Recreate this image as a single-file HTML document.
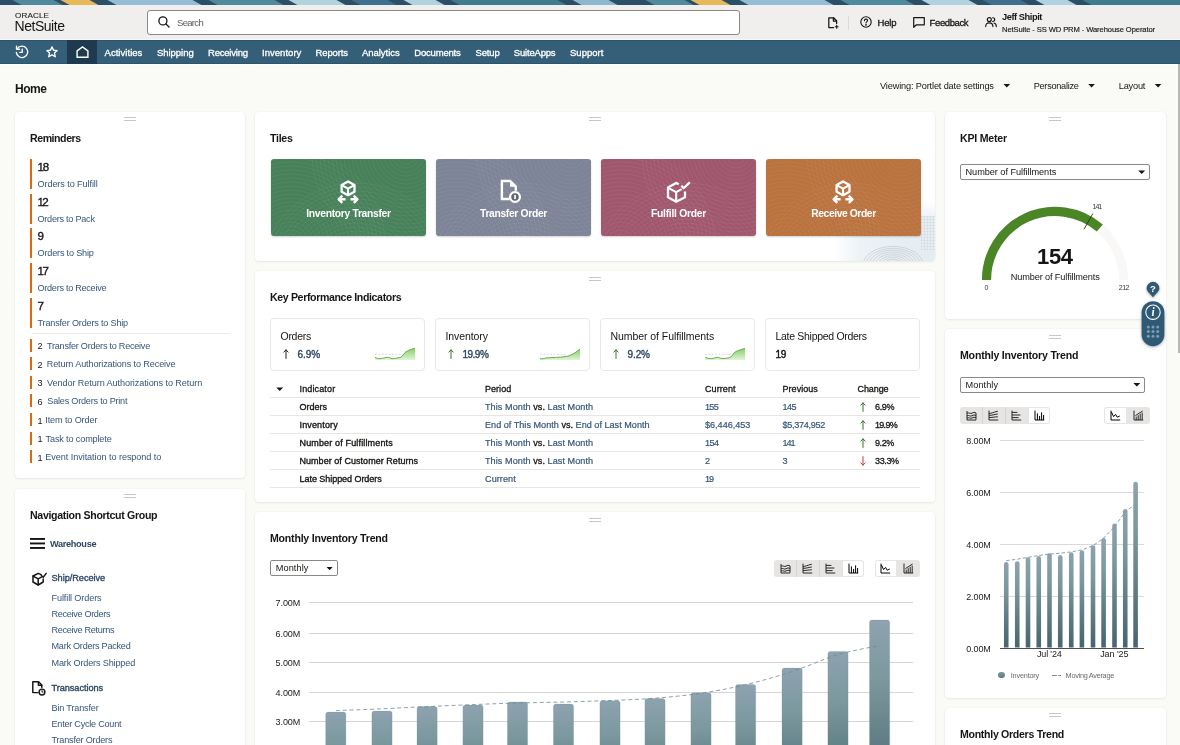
<!DOCTYPE html>
<html lang="en">
<head>
<meta charset="utf-8">
<title>Home - NetSuite (SS WD PRM)</title>
<style>
*{box-sizing:border-box;margin:0;padding:0}
html,body{width:1180px;height:745px;overflow:hidden;background:#fafaf6}
body{font-family:"Liberation Sans",sans-serif;color:#161513;position:relative}
.t{position:absolute;white-space:nowrap;line-height:1;display:block}
#app{position:absolute;left:0;top:0;width:1180px;height:745px;overflow:hidden;will-change:transform}
.abs{position:absolute}
.card{position:absolute;background:#fff;border-radius:4px;box-shadow:0 1px 2.5px rgba(40,40,30,.07),0 0 1.5px rgba(40,40,30,.09)}
.grip{position:absolute;width:12px;height:4px;border-top:1px solid #c9c7c4;border-bottom:1px solid #c9c7c4}
.rb{position:absolute;left:30px;width:2.2px;background:#e0680f}
svg{position:absolute;overflow:visible}
.sel{position:absolute;border:1px solid #8b8885;border-radius:2px;background:#fff}
.caret{position:absolute;width:7.6px;height:4px;background:#161513;clip-path:polygon(0 0,100% 0,50% 100%)}
.kbox{position:absolute;border:1px solid #e9e7e4;border-radius:4px;background:#fff}
.hl{position:absolute;height:1px;background:#e8e6e3}
.tile{position:absolute;border-radius:3px;overflow:hidden}
.bt{position:absolute;background:#e6e5e3}
.bt.on{background:#fff;box-shadow:0 0 0 1px #e6e5e3 inset}
</style>
</head>
<body>
<div id="app">
<svg width="1180" height="5" style="left:0;top:0" viewBox="0 0 1180 5">
<rect width="1180" height="5" fill="#2c4f68"/>
<polygon points="12.5,0 53.5,0 62.5,5 21.5,5" fill="#4f8a9e"/>
<polygon points="60.5,0 89.5,0 98.5,5 69.5,5" fill="#e8b95a"/>
<polygon points="107.5,0 192.5,0 201.5,5 116.5,5" fill="#95bdd6"/>
<polygon points="208.5,0 274.5,0 283.5,5 217.5,5" fill="#4f8a9e"/>
<polygon points="288.5,0 336.5,0 345.5,5 297.5,5" fill="#b0d3e0"/>
<polygon points="351.5,0 387.5,0 396.5,5 360.5,5" fill="#3f6f8e"/>
<polygon points="403.5,0 435.5,0 444.5,5 412.5,5" fill="#b0d3e0"/>
<polygon points="450.5,0 557.5,0 566.5,5 459.5,5" fill="#3f7d8e"/>
<polygon points="572.5,0 608.5,0 617.5,5 581.5,5" fill="#8cb8cf"/>
<polygon points="645.5,0 684.5,0 693.5,5 654.5,5" fill="#4f8a9e"/>
<polygon points="690.5,0 721.5,0 730.5,5 699.5,5" fill="#e8b95a"/>
<polygon points="739.5,0 824.5,0 833.5,5 748.5,5" fill="#95bdd6"/>
<polygon points="840.5,0 905.5,0 914.5,5 849.5,5" fill="#4f8a9e"/>
<polygon points="921.5,0 968.5,0 977.5,5 930.5,5" fill="#b0d3e0"/>
<polygon points="982.5,0 1020.5,0 1029.5,5 991.5,5" fill="#3f6f8e"/>
<polygon points="1035.5,0 1067.5,0 1076.5,5 1044.5,5" fill="#b0d3e0"/>
<polygon points="1082.5,0 1185.5,0 1194.5,5 1091.5,5" fill="#3f7d8e"/>
</svg>
<header class="abs" style="left:0;top:5px;width:1180px;height:35px;background:#f1efed"></header>
<span class="t" style="left:15.00px;top:13px;font-size:6.4px;color:#1d1d1d;-webkit-text-stroke:0.10px;transform:scaleX(1.27);transform-origin:0 0;letter-spacing:.1px;">ORACLE</span>
<span class="t" style="left:14.50px;top:19px;font-size:14.0px;color:#151413;letter-spacing:-0.463px;">NetSuite</span>
<div class="abs" style="left:146.5px;top:9.5px;width:593px;height:25px;background:#fff;border:1px solid #8b8885;border-radius:3px"></div>
<svg width="12" height="12" style="left:157.5px;top:15.5px" viewBox="0 0 12 12" fill="none" stroke="#161513" stroke-width="1.3" stroke-linecap="round"><circle cx="4.9" cy="4.9" r="4"/><path d="M7.9 7.9 L11 11"/></svg>
<span class="t" style="left:177.00px;top:18px;font-size:9.5px;color:#5f5c58;letter-spacing:-0.685px;">Search</span>
<svg width="11" height="12" style="left:827.5px;top:16.5px" viewBox="0 0 11 12" fill="none" stroke="#161513" stroke-width="1.25" stroke-linejoin="round" stroke-linecap="round"><path d="M5.6 10.6 H0.8 V0.8 H5.6 L8.6 3.8 V6.6"/><path d="M5.4 0.9 V4 H8.5"/><path d="M8.7 8.4 V11.2 M7.3 9.8 H10.1" stroke-width="1.1"/></svg>
<div class="abs" style="left:848px;top:16px;width:1px;height:14px;background:#dedbd7"></div>
<svg width="12" height="12" style="left:860.4px;top:16px" viewBox="0 0 12 12" fill="none" stroke="#161513" stroke-width="1.1" stroke-linecap="round"><circle cx="6" cy="6" r="5.2"/><path d="M4.4 4.7 C4.4 3.6 5.1 3.1 6 3.1 C6.9 3.1 7.6 3.7 7.6 4.5 C7.6 5.6 6 5.7 6 7"/><circle cx="6" cy="8.8" r=".35" fill="#161513"/></svg>
<span class="t" style="left:877.60px;top:18px;font-size:9.5px;-webkit-text-stroke:0.30px;letter-spacing:-0.237px;">Help</span>
<svg width="12" height="11" style="left:912.6px;top:16.8px" viewBox="0 0 12 11" fill="none" stroke="#161513" stroke-width="1.2" stroke-linejoin="round"><path d="M0.7 0.7 H11.3 V7.8 H3.4 L0.7 10.3 Z"/></svg>
<span class="t" style="left:929.60px;top:18px;font-size:9.5px;-webkit-text-stroke:0.30px;letter-spacing:-0.392px;">Feedback</span>
<svg width="12" height="10" style="left:984.6px;top:17.4px" viewBox="0 0 12 10" fill="none" stroke="#161513" stroke-width="1.15" stroke-linecap="round"><circle cx="4.3" cy="2.6" r="2"/><path d="M0.7 9.6 C0.7 6.9 2.2 5.8 4.3 5.8 C6.4 5.8 7.9 6.9 7.9 9.6"/><path d="M7.6 0.7 C8.9 0.7 9.7 1.5 9.7 2.6 C9.7 3.7 8.9 4.5 7.6 4.5"/><path d="M9 6 C10.5 6.3 11.3 7.5 11.3 9.6"/></svg>
<span class="t" style="left:1002.00px;top:13px;font-size:9.3px;font-weight:700;letter-spacing:-0.449px;">Jeff Shipit</span>
<span class="t" style="left:1002.00px;top:26px;font-size:7.6px;-webkit-text-stroke:0.15px;letter-spacing:-0.101px;">NetSuite - SS WD PRM - Warehouse Operator</span>
<div class="abs" style="left:0;top:39px;width:1180px;height:1px;background:#f8f7f6"></div>
<nav class="abs" style="left:0;top:40px;width:1180px;height:24px;background:#355f79;box-shadow:inset 0 1px 0 #2d546d,inset 0 -1px 0 #2d546d"></nav>
<div class="abs" style="left:0;top:64px;width:1180px;height:1px;background:#fdfdfb"></div>
<div class="abs" style="left:67px;top:40px;width:30px;height:24px;background:#1f3a4f"></div>
<svg width="14" height="14" style="left:15.2px;top:44.8px" viewBox="0 0 14 14" fill="none" stroke="#fff" stroke-width="1.35" stroke-linecap="round" stroke-linejoin="round"><path d="M2.3 3.6 A5.7 5.7 0 1 1 1.3 7.4"/><path d="M1.5 1.2 V4.2 H4.5"/><path d="M7.2 4.2 V7.4 H4.8"/></svg>
<svg width="12" height="12" style="left:46.1px;top:46px" viewBox="0 0 14 14" fill="none" stroke="#fff" stroke-width="1.55" stroke-linejoin="round"><path d="M7 1 L8.8 5 L13.1 5.4 L9.9 8.3 L10.8 12.6 L7 10.4 L3.2 12.6 L4.1 8.3 L0.9 5.4 L5.2 5 Z"/></svg>
<svg width="13" height="12" style="left:75.5px;top:45.8px" viewBox="0 0 13 12" fill="none" stroke="#fff" stroke-width="1.4" stroke-linejoin="miter"><path d="M1.1 4.9 L6.5 0.9 L11.9 4.9 V11.2 H1.1 Z"/></svg>
<span class="t" style="left:104.50px;top:48px;font-size:9.5px;color:#fff;-webkit-text-stroke:0.30px;letter-spacing:0.042px;">Activities</span>
<span class="t" style="left:157.00px;top:48px;font-size:9.5px;color:#fff;-webkit-text-stroke:0.30px;letter-spacing:-0.042px;">Shipping</span>
<span class="t" style="left:208.00px;top:48px;font-size:9.5px;color:#fff;-webkit-text-stroke:0.30px;letter-spacing:-0.202px;">Receiving</span>
<span class="t" style="left:262.00px;top:48px;font-size:9.5px;color:#fff;-webkit-text-stroke:0.30px;letter-spacing:0.036px;">Inventory</span>
<span class="t" style="left:315.50px;top:48px;font-size:9.5px;color:#fff;-webkit-text-stroke:0.30px;letter-spacing:-0.124px;">Reports</span>
<span class="t" style="left:362.00px;top:48px;font-size:9.5px;color:#fff;-webkit-text-stroke:0.30px;letter-spacing:-0.041px;">Analytics</span>
<span class="t" style="left:414.25px;top:48px;font-size:9.5px;color:#fff;-webkit-text-stroke:0.30px;letter-spacing:-0.185px;">Documents</span>
<span class="t" style="left:475.50px;top:48px;font-size:9.5px;color:#fff;-webkit-text-stroke:0.30px;letter-spacing:-0.136px;">Setup</span>
<span class="t" style="left:513.75px;top:48px;font-size:9.5px;color:#fff;-webkit-text-stroke:0.30px;letter-spacing:-0.185px;">SuiteApps</span>
<span class="t" style="left:570.00px;top:48px;font-size:9.5px;color:#fff;-webkit-text-stroke:0.30px;letter-spacing:0.017px;">Support</span>
<span class="t" style="left:15.00px;top:83px;font-size:12.0px;font-weight:700;letter-spacing:-0.511px;">Home</span>
<span class="t" style="left:880.00px;top:82px;font-size:9.2px;letter-spacing:-0.151px;">Viewing: Portlet date settings</span>
<i class="caret" style="left:1003.0px;top:83.6px"></i>
<span class="t" style="left:1033.70px;top:82px;font-size:9.2px;letter-spacing:-0.283px;">Personalize</span>
<i class="caret" style="left:1087.8px;top:83.6px"></i>
<span class="t" style="left:1118.80px;top:82px;font-size:9.2px;letter-spacing:-0.199px;">Layout</span>
<i class="caret" style="left:1154.3px;top:83.6px"></i>
<div class="abs" style="left:1177.5px;top:64px;width:2.5px;height:289px;background:#b9b8b6"></div>
<section class="card" style="left:15px;top:112px;width:230px;height:366px"></section>
<i class="grip" style="left:124px;top:117px"></i>
<span class="t" style="left:30.00px;top:133px;font-size:10.6px;font-weight:700;letter-spacing:-0.452px;">Reminders</span>
<i class="rb" style="top:158.8px;height:30px"></i>
<span class="t" style="left:37.50px;top:161px;font-size:11.6px;-webkit-text-stroke:0.35px;letter-spacing:-1.153px;">18</span>
<span class="t" style="left:37.50px;top:180px;font-size:9.1px;color:#35567a;letter-spacing:-0.086px;">Orders to Fulfill</span>
<i class="rb" style="top:193.6px;height:30px"></i>
<span class="t" style="left:37.50px;top:196px;font-size:11.6px;-webkit-text-stroke:0.35px;letter-spacing:-1.653px;">12</span>
<span class="t" style="left:37.50px;top:215px;font-size:9.1px;color:#35567a;letter-spacing:-0.247px;">Orders to Pack</span>
<i class="rb" style="top:228.4px;height:30px"></i>
<span class="t" style="left:37.50px;top:230px;font-size:11.6px;-webkit-text-stroke:0.35px;letter-spacing:-0.853px;">9</span>
<span class="t" style="left:37.50px;top:249px;font-size:9.1px;color:#35567a;letter-spacing:-0.174px;">Orders to Ship</span>
<i class="rb" style="top:263.2px;height:30px"></i>
<span class="t" style="left:37.50px;top:265px;font-size:11.6px;-webkit-text-stroke:0.35px;letter-spacing:-1.353px;">17</span>
<span class="t" style="left:37.50px;top:284px;font-size:9.1px;color:#35567a;letter-spacing:-0.270px;">Orders to Receive</span>
<i class="rb" style="top:298.0px;height:30px"></i>
<span class="t" style="left:37.50px;top:300px;font-size:11.6px;-webkit-text-stroke:0.35px;letter-spacing:-0.853px;">7</span>
<span class="t" style="left:37.50px;top:319px;font-size:9.1px;color:#35567a;letter-spacing:-0.182px;">Transfer Orders to Ship</span>
<div class="hl" style="left:32px;top:332.5px;width:198px;background:#eceae7"></div>
<i class="rb" style="top:338.5px;height:13px"></i>
<span class="t" style="left:37.50px;top:342px;font-size:9.1px;">2</span>
<span class="t" style="left:47.00px;top:342px;font-size:9.1px;color:#35567a;letter-spacing:-0.244px;">Transfer Orders to Receive</span>
<i class="rb" style="top:357.1px;height:13px"></i>
<span class="t" style="left:37.50px;top:361px;font-size:9.1px;">2</span>
<span class="t" style="left:46.70px;top:360px;font-size:9.1px;color:#35567a;letter-spacing:-0.117px;">Return Authorizations to Receive</span>
<i class="rb" style="top:375.8px;height:13px"></i>
<span class="t" style="left:37.50px;top:379px;font-size:9.1px;">3</span>
<span class="t" style="left:47.00px;top:379px;font-size:9.1px;color:#35567a;letter-spacing:-0.080px;">Vendor Return Authorizations to Return</span>
<i class="rb" style="top:394.4px;height:13px"></i>
<span class="t" style="left:37.50px;top:398px;font-size:9.1px;">6</span>
<span class="t" style="left:47.30px;top:397px;font-size:9.1px;color:#35567a;letter-spacing:-0.210px;">Sales Orders to Print</span>
<i class="rb" style="top:413.0px;height:13px"></i>
<span class="t" style="left:37.50px;top:417px;font-size:9.1px;">1</span>
<span class="t" style="left:45.30px;top:416px;font-size:9.1px;color:#35567a;letter-spacing:-0.121px;">Item to Order</span>
<i class="rb" style="top:431.6px;height:13px"></i>
<span class="t" style="left:37.50px;top:435px;font-size:9.1px;">1</span>
<span class="t" style="left:45.60px;top:435px;font-size:9.1px;color:#35567a;letter-spacing:-0.140px;">Task to complete</span>
<i class="rb" style="top:450.3px;height:13px"></i>
<span class="t" style="left:37.50px;top:454px;font-size:9.1px;">1</span>
<span class="t" style="left:45.30px;top:453px;font-size:9.1px;color:#35567a;letter-spacing:-0.060px;">Event Invitation to respond to</span>
<section class="card" style="left:15px;top:489px;width:230px;height:270px"></section>
<i class="grip" style="left:124px;top:494px"></i>
<span class="t" style="left:30.00px;top:510px;font-size:10.6px;font-weight:700;letter-spacing:-0.327px;">Navigation Shortcut Group</span>
<svg width="15" height="11" style="left:30px;top:538.2px" viewBox="0 0 15 11" fill="#161513"><rect y="0" width="15" height="1.9"/><rect y="4.5" width="15" height="1.9"/><rect y="9" width="15" height="1.9"/></svg>
<span class="t" style="left:50.00px;top:540px;font-size:9.2px;color:#2b4763;font-weight:700;letter-spacing:-0.332px;">Warehouse</span>
<svg width="15" height="14" style="left:31.6px;top:571.6px" viewBox="0 0 15 14" fill="none" stroke="#161513" stroke-width="1.5" stroke-linejoin="round" stroke-linecap="round"><path d="M9.2 2.6 L6.2 1.4 L1 4 V10 L6.2 13 L11.2 10 V7"/><path d="M1.1 4.1 L6.2 6.9 L9.4 5.2 M6.2 6.9 V12.8"/><path d="M9.4 3.6 L11.2 5.2 L14.2 1.4"/></svg>
<span class="t" style="left:51.50px;top:574px;font-size:9.2px;color:#2b4763;-webkit-text-stroke:0.35px;letter-spacing:-0.037px;">Ship/Receive</span>
<span class="t" style="left:51.50px;top:594px;font-size:9.1px;color:#35567a;letter-spacing:-0.110px;">Fulfill Orders</span>
<span class="t" style="left:51.50px;top:610px;font-size:9.1px;color:#35567a;letter-spacing:-0.313px;">Receive Orders</span>
<span class="t" style="left:51.50px;top:626px;font-size:9.1px;color:#35567a;letter-spacing:-0.296px;">Receive Returns</span>
<span class="t" style="left:51.50px;top:642px;font-size:9.1px;color:#35567a;letter-spacing:-0.244px;">Mark Orders Packed</span>
<span class="t" style="left:51.50px;top:659px;font-size:9.1px;color:#35567a;letter-spacing:-0.149px;">Mark Orders Shipped</span>
<svg width="14" height="15" style="left:31.6px;top:681.4px" viewBox="0 0 14 15" fill="none" stroke="#161513" stroke-width="1.45" stroke-linejoin="round" stroke-linecap="round"><path d="M6 11.6 H0.8 V0.8 H6.6 L9.8 4 V6.4"/><path d="M6.4 0.9 V4.2 H9.7"/><circle cx="10" cy="11" r="2.9"/><path d="M10 9.7 V11.1 H11" stroke-width="1"/></svg>
<span class="t" style="left:51.50px;top:684px;font-size:9.2px;color:#2b4763;-webkit-text-stroke:0.35px;letter-spacing:-0.055px;">Transactions</span>
<span class="t" style="left:51.50px;top:704px;font-size:9.1px;color:#35567a;letter-spacing:-0.169px;">Bin Transfer</span>
<span class="t" style="left:51.50px;top:720px;font-size:9.1px;color:#35567a;letter-spacing:-0.235px;">Enter Cycle Count</span>
<span class="t" style="left:51.50px;top:736px;font-size:9.1px;color:#35567a;letter-spacing:-0.203px;">Transfer Orders</span>
<section class="card" style="left:255px;top:112px;width:680px;height:149px;overflow:hidden"><div class="abs" style="left:578px;top:88px;width:102px;height:61px;background:linear-gradient(to right,rgba(236,242,246,0),#ecf2f5 28%,#e4ecf1 100%);-webkit-mask-image:linear-gradient(to bottom,transparent,#000 45%);mask-image:linear-gradient(to bottom,transparent,#000 45%)"></div><svg width="64" height="26" style="left:606px;top:123px;overflow:hidden" viewBox="0 0 64 26" fill="none" stroke="#b9c4cc" stroke-width=".7" stroke-opacity=".85"><ellipse cx="32" cy="30" rx="9.0" ry="5.6"/><ellipse cx="32" cy="30" rx="12.0" ry="7.4"/><ellipse cx="32" cy="30" rx="15.0" ry="9.3"/><ellipse cx="32" cy="30" rx="18.0" ry="11.2"/><ellipse cx="32" cy="30" rx="21.0" ry="13.0"/><ellipse cx="32" cy="30" rx="24.0" ry="14.9"/><ellipse cx="32" cy="30" rx="27.0" ry="16.7"/><ellipse cx="32" cy="30" rx="30.0" ry="18.6"/></svg><div class="abs" style="left:666px;top:104px;width:14px;height:34px;background:repeating-linear-gradient(to bottom,rgba(190,204,214,.3) 0 .6px,transparent .6px 3px),repeating-linear-gradient(to right,rgba(190,204,214,.3) 0 .6px,transparent .6px 3px),#e7eef2"></div></section>
<i class="grip" style="left:589px;top:117px"></i>
<span class="t" style="left:270.00px;top:133px;font-size:10.6px;font-weight:700;letter-spacing:-0.271px;">Tiles</span>
<div class="tile" style="left:271px;top:159.3px;width:155px;height:76.5px;background:#47815a;box-shadow:0 1px 2px rgba(0,0,0,.18)"><svg width="155" height="77" style="left:0;top:0" viewBox="0 0 155 77" fill="none" stroke="#fff" stroke-opacity=".06" stroke-width="1"><circle cx="20" cy="85" r="6"/><circle cx="135" cy="-5" r="6"/><circle cx="85" cy="120" r="8"/><circle cx="20" cy="85" r="10"/><circle cx="135" cy="-5" r="10"/><circle cx="85" cy="120" r="12"/><circle cx="20" cy="85" r="14"/><circle cx="135" cy="-5" r="14"/><circle cx="85" cy="120" r="16"/><circle cx="20" cy="85" r="18"/><circle cx="135" cy="-5" r="18"/><circle cx="85" cy="120" r="20"/><circle cx="20" cy="85" r="22"/><circle cx="135" cy="-5" r="22"/><circle cx="85" cy="120" r="24"/><circle cx="20" cy="85" r="26"/><circle cx="135" cy="-5" r="26"/><circle cx="85" cy="120" r="28"/><circle cx="20" cy="85" r="30"/><circle cx="135" cy="-5" r="30"/><circle cx="85" cy="120" r="32"/><circle cx="20" cy="85" r="34"/><circle cx="135" cy="-5" r="34"/><circle cx="85" cy="120" r="36"/><circle cx="20" cy="85" r="38"/><circle cx="135" cy="-5" r="38"/><circle cx="85" cy="120" r="40"/><circle cx="20" cy="85" r="42"/><circle cx="135" cy="-5" r="42"/><circle cx="85" cy="120" r="44"/><circle cx="20" cy="85" r="46"/><circle cx="135" cy="-5" r="46"/><circle cx="85" cy="120" r="48"/><circle cx="20" cy="85" r="50"/><circle cx="135" cy="-5" r="50"/><circle cx="85" cy="120" r="52"/><circle cx="20" cy="85" r="54"/><circle cx="135" cy="-5" r="54"/><circle cx="85" cy="120" r="56"/><circle cx="20" cy="85" r="58"/><circle cx="135" cy="-5" r="58"/><circle cx="85" cy="120" r="60"/><circle cx="20" cy="85" r="62"/><circle cx="135" cy="-5" r="62"/><circle cx="85" cy="120" r="64"/><circle cx="20" cy="85" r="66"/><circle cx="135" cy="-5" r="66"/><circle cx="85" cy="120" r="68"/><circle cx="20" cy="85" r="70"/><circle cx="135" cy="-5" r="70"/><circle cx="85" cy="120" r="72"/><circle cx="20" cy="85" r="74"/><circle cx="135" cy="-5" r="74"/><circle cx="85" cy="120" r="76"/><circle cx="20" cy="85" r="78"/><circle cx="135" cy="-5" r="78"/><circle cx="85" cy="120" r="80"/><circle cx="20" cy="85" r="82"/><circle cx="135" cy="-5" r="82"/><circle cx="85" cy="120" r="84"/><circle cx="20" cy="85" r="86"/><circle cx="135" cy="-5" r="86"/><circle cx="85" cy="120" r="88"/><circle cx="20" cy="85" r="90"/><circle cx="135" cy="-5" r="90"/><circle cx="85" cy="120" r="92"/><circle cx="20" cy="85" r="94"/><circle cx="135" cy="-5" r="94"/><circle cx="85" cy="120" r="96"/></svg><svg width="22" height="24" style="left:66.0px;top:20.5px" viewBox="0 0 22 24" fill="none" stroke="#fff" stroke-width="2.3" stroke-linejoin="round" stroke-linecap="butt"><path d="M11.05 1.5 L17.5 5.1 V11.7 L11.05 15.3 L4.6 11.7 V5.1 Z"/><path d="M4.8 5.2 L11.05 8.6 L17.3 5.2 M11.05 8.6 V15.2" stroke-width="2.1"/><path d="M1.9 19.3 H8.6 M5.3 15.7 L1.7 19.3 L5.3 22.9" stroke-width="2.4"/><path d="M20.2 19.3 H13.5 M16.8 15.7 L20.4 19.3 L16.8 22.9" stroke-width="2.4"/></svg></div>
<span class="t" style="left:306.25px;top:209px;font-size:10.3px;color:#fff;font-weight:700;letter-spacing:-0.297px;">Inventory Transfer</span>
<div class="tile" style="left:436px;top:159.3px;width:155px;height:76.5px;background:#7d8497;box-shadow:0 1px 2px rgba(0,0,0,.18)"><svg width="155" height="77" style="left:0;top:0" viewBox="0 0 155 77" fill="none" stroke="#fff" stroke-opacity=".06" stroke-width="1"><circle cx="20" cy="85" r="6"/><circle cx="135" cy="-5" r="6"/><circle cx="85" cy="120" r="8"/><circle cx="20" cy="85" r="10"/><circle cx="135" cy="-5" r="10"/><circle cx="85" cy="120" r="12"/><circle cx="20" cy="85" r="14"/><circle cx="135" cy="-5" r="14"/><circle cx="85" cy="120" r="16"/><circle cx="20" cy="85" r="18"/><circle cx="135" cy="-5" r="18"/><circle cx="85" cy="120" r="20"/><circle cx="20" cy="85" r="22"/><circle cx="135" cy="-5" r="22"/><circle cx="85" cy="120" r="24"/><circle cx="20" cy="85" r="26"/><circle cx="135" cy="-5" r="26"/><circle cx="85" cy="120" r="28"/><circle cx="20" cy="85" r="30"/><circle cx="135" cy="-5" r="30"/><circle cx="85" cy="120" r="32"/><circle cx="20" cy="85" r="34"/><circle cx="135" cy="-5" r="34"/><circle cx="85" cy="120" r="36"/><circle cx="20" cy="85" r="38"/><circle cx="135" cy="-5" r="38"/><circle cx="85" cy="120" r="40"/><circle cx="20" cy="85" r="42"/><circle cx="135" cy="-5" r="42"/><circle cx="85" cy="120" r="44"/><circle cx="20" cy="85" r="46"/><circle cx="135" cy="-5" r="46"/><circle cx="85" cy="120" r="48"/><circle cx="20" cy="85" r="50"/><circle cx="135" cy="-5" r="50"/><circle cx="85" cy="120" r="52"/><circle cx="20" cy="85" r="54"/><circle cx="135" cy="-5" r="54"/><circle cx="85" cy="120" r="56"/><circle cx="20" cy="85" r="58"/><circle cx="135" cy="-5" r="58"/><circle cx="85" cy="120" r="60"/><circle cx="20" cy="85" r="62"/><circle cx="135" cy="-5" r="62"/><circle cx="85" cy="120" r="64"/><circle cx="20" cy="85" r="66"/><circle cx="135" cy="-5" r="66"/><circle cx="85" cy="120" r="68"/><circle cx="20" cy="85" r="70"/><circle cx="135" cy="-5" r="70"/><circle cx="85" cy="120" r="72"/><circle cx="20" cy="85" r="74"/><circle cx="135" cy="-5" r="74"/><circle cx="85" cy="120" r="76"/><circle cx="20" cy="85" r="78"/><circle cx="135" cy="-5" r="78"/><circle cx="85" cy="120" r="80"/><circle cx="20" cy="85" r="82"/><circle cx="135" cy="-5" r="82"/><circle cx="85" cy="120" r="84"/><circle cx="20" cy="85" r="86"/><circle cx="135" cy="-5" r="86"/><circle cx="85" cy="120" r="88"/><circle cx="20" cy="85" r="90"/><circle cx="135" cy="-5" r="90"/><circle cx="85" cy="120" r="92"/><circle cx="20" cy="85" r="94"/><circle cx="135" cy="-5" r="94"/><circle cx="85" cy="120" r="96"/></svg><svg width="22" height="25" style="left:64.3px;top:20.0px" viewBox="0 0 22 25" fill="none" stroke="#fff" stroke-width="2.4" stroke-linejoin="miter" stroke-linecap="butt"><path d="M9.6 20 H1.9 V2 H10.2 L15.8 7.6 V11.8"/><path d="M10 1.6 V7.8 H16.2 Z" fill="#fff" stroke="none"/><circle cx="15" cy="18" r="4.9" stroke-width="2.3" fill="rgba(0,0,0,.24)"/><rect x="14.2" y="16" width="1.7" height="4" fill="#fff" stroke="none"/></svg></div>
<span class="t" style="left:480.00px;top:209px;font-size:10.3px;color:#fff;font-weight:700;letter-spacing:-0.325px;">Transfer Order</span>
<div class="tile" style="left:601px;top:159.3px;width:155px;height:76.5px;background:#a0576e;box-shadow:0 1px 2px rgba(0,0,0,.18)"><svg width="155" height="77" style="left:0;top:0" viewBox="0 0 155 77" fill="none" stroke="#fff" stroke-opacity=".06" stroke-width="1"><circle cx="20" cy="85" r="6"/><circle cx="135" cy="-5" r="6"/><circle cx="85" cy="120" r="8"/><circle cx="20" cy="85" r="10"/><circle cx="135" cy="-5" r="10"/><circle cx="85" cy="120" r="12"/><circle cx="20" cy="85" r="14"/><circle cx="135" cy="-5" r="14"/><circle cx="85" cy="120" r="16"/><circle cx="20" cy="85" r="18"/><circle cx="135" cy="-5" r="18"/><circle cx="85" cy="120" r="20"/><circle cx="20" cy="85" r="22"/><circle cx="135" cy="-5" r="22"/><circle cx="85" cy="120" r="24"/><circle cx="20" cy="85" r="26"/><circle cx="135" cy="-5" r="26"/><circle cx="85" cy="120" r="28"/><circle cx="20" cy="85" r="30"/><circle cx="135" cy="-5" r="30"/><circle cx="85" cy="120" r="32"/><circle cx="20" cy="85" r="34"/><circle cx="135" cy="-5" r="34"/><circle cx="85" cy="120" r="36"/><circle cx="20" cy="85" r="38"/><circle cx="135" cy="-5" r="38"/><circle cx="85" cy="120" r="40"/><circle cx="20" cy="85" r="42"/><circle cx="135" cy="-5" r="42"/><circle cx="85" cy="120" r="44"/><circle cx="20" cy="85" r="46"/><circle cx="135" cy="-5" r="46"/><circle cx="85" cy="120" r="48"/><circle cx="20" cy="85" r="50"/><circle cx="135" cy="-5" r="50"/><circle cx="85" cy="120" r="52"/><circle cx="20" cy="85" r="54"/><circle cx="135" cy="-5" r="54"/><circle cx="85" cy="120" r="56"/><circle cx="20" cy="85" r="58"/><circle cx="135" cy="-5" r="58"/><circle cx="85" cy="120" r="60"/><circle cx="20" cy="85" r="62"/><circle cx="135" cy="-5" r="62"/><circle cx="85" cy="120" r="64"/><circle cx="20" cy="85" r="66"/><circle cx="135" cy="-5" r="66"/><circle cx="85" cy="120" r="68"/><circle cx="20" cy="85" r="70"/><circle cx="135" cy="-5" r="70"/><circle cx="85" cy="120" r="72"/><circle cx="20" cy="85" r="74"/><circle cx="135" cy="-5" r="74"/><circle cx="85" cy="120" r="76"/><circle cx="20" cy="85" r="78"/><circle cx="135" cy="-5" r="78"/><circle cx="85" cy="120" r="80"/><circle cx="20" cy="85" r="82"/><circle cx="135" cy="-5" r="82"/><circle cx="85" cy="120" r="84"/><circle cx="20" cy="85" r="86"/><circle cx="135" cy="-5" r="86"/><circle cx="85" cy="120" r="88"/><circle cx="20" cy="85" r="90"/><circle cx="135" cy="-5" r="90"/><circle cx="85" cy="120" r="92"/><circle cx="20" cy="85" r="94"/><circle cx="135" cy="-5" r="94"/><circle cx="85" cy="120" r="96"/></svg><svg width="25" height="23" style="left:65.0px;top:21.7px" viewBox="0 0 25 23" fill="none" stroke="#fff" stroke-width="2.3" stroke-linejoin="round" stroke-linecap="butt"><path d="M12.8 3.2 L10.2 1.9 L2 6.6 V16.2 L10.2 20.7 L19 16.2 V10.4"/><path d="M2.2 6.8 L10.2 11.2 L15.6 8.2 M10.2 11.2 V20.5" stroke-width="2.1"/><path d="M15.4 4.6 L17.6 7.2 L23.8 1.4" stroke-width="2.2"/></svg></div>
<span class="t" style="left:651.00px;top:209px;font-size:10.3px;color:#fff;font-weight:700;letter-spacing:-0.258px;">Fulfill Order</span>
<div class="tile" style="left:766px;top:159.3px;width:155px;height:76.5px;background:#ba723e;box-shadow:0 1px 2px rgba(0,0,0,.18)"><svg width="155" height="77" style="left:0;top:0" viewBox="0 0 155 77" fill="none" stroke="#fff" stroke-opacity=".06" stroke-width="1"><circle cx="20" cy="85" r="6"/><circle cx="135" cy="-5" r="6"/><circle cx="85" cy="120" r="8"/><circle cx="20" cy="85" r="10"/><circle cx="135" cy="-5" r="10"/><circle cx="85" cy="120" r="12"/><circle cx="20" cy="85" r="14"/><circle cx="135" cy="-5" r="14"/><circle cx="85" cy="120" r="16"/><circle cx="20" cy="85" r="18"/><circle cx="135" cy="-5" r="18"/><circle cx="85" cy="120" r="20"/><circle cx="20" cy="85" r="22"/><circle cx="135" cy="-5" r="22"/><circle cx="85" cy="120" r="24"/><circle cx="20" cy="85" r="26"/><circle cx="135" cy="-5" r="26"/><circle cx="85" cy="120" r="28"/><circle cx="20" cy="85" r="30"/><circle cx="135" cy="-5" r="30"/><circle cx="85" cy="120" r="32"/><circle cx="20" cy="85" r="34"/><circle cx="135" cy="-5" r="34"/><circle cx="85" cy="120" r="36"/><circle cx="20" cy="85" r="38"/><circle cx="135" cy="-5" r="38"/><circle cx="85" cy="120" r="40"/><circle cx="20" cy="85" r="42"/><circle cx="135" cy="-5" r="42"/><circle cx="85" cy="120" r="44"/><circle cx="20" cy="85" r="46"/><circle cx="135" cy="-5" r="46"/><circle cx="85" cy="120" r="48"/><circle cx="20" cy="85" r="50"/><circle cx="135" cy="-5" r="50"/><circle cx="85" cy="120" r="52"/><circle cx="20" cy="85" r="54"/><circle cx="135" cy="-5" r="54"/><circle cx="85" cy="120" r="56"/><circle cx="20" cy="85" r="58"/><circle cx="135" cy="-5" r="58"/><circle cx="85" cy="120" r="60"/><circle cx="20" cy="85" r="62"/><circle cx="135" cy="-5" r="62"/><circle cx="85" cy="120" r="64"/><circle cx="20" cy="85" r="66"/><circle cx="135" cy="-5" r="66"/><circle cx="85" cy="120" r="68"/><circle cx="20" cy="85" r="70"/><circle cx="135" cy="-5" r="70"/><circle cx="85" cy="120" r="72"/><circle cx="20" cy="85" r="74"/><circle cx="135" cy="-5" r="74"/><circle cx="85" cy="120" r="76"/><circle cx="20" cy="85" r="78"/><circle cx="135" cy="-5" r="78"/><circle cx="85" cy="120" r="80"/><circle cx="20" cy="85" r="82"/><circle cx="135" cy="-5" r="82"/><circle cx="85" cy="120" r="84"/><circle cx="20" cy="85" r="86"/><circle cx="135" cy="-5" r="86"/><circle cx="85" cy="120" r="88"/><circle cx="20" cy="85" r="90"/><circle cx="135" cy="-5" r="90"/><circle cx="85" cy="120" r="92"/><circle cx="20" cy="85" r="94"/><circle cx="135" cy="-5" r="94"/><circle cx="85" cy="120" r="96"/></svg><svg width="22" height="24" style="left:66.0px;top:20.5px" viewBox="0 0 22 24" fill="none" stroke="#fff" stroke-width="2.3" stroke-linejoin="round" stroke-linecap="butt"><path d="M11.05 1.5 L17.5 5.1 V11.7 L11.05 15.3 L4.6 11.7 V5.1 Z"/><path d="M4.8 5.2 L11.05 8.6 L17.3 5.2 M11.05 8.6 V15.2" stroke-width="2.1"/><path d="M1.9 19.3 H8.6 M5.3 15.7 L1.7 19.3 L5.3 22.9" stroke-width="2.4"/><path d="M20.2 19.3 H13.5 M16.8 15.7 L20.4 19.3 L16.8 22.9" stroke-width="2.4"/></svg></div>
<span class="t" style="left:811.25px;top:209px;font-size:10.3px;color:#fff;font-weight:700;letter-spacing:-0.411px;">Receive Order</span>
<section class="card" style="left:255px;top:271px;width:680px;height:231px"></section>
<i class="grip" style="left:589px;top:277px"></i>
<span class="t" style="left:270.00px;top:292px;font-size:10.6px;font-weight:700;letter-spacing:-0.366px;">Key Performance Indicators</span>
<div class="kbox" style="left:269.5px;top:318px;width:155.5px;height:52.5px"></div>
<span class="t" style="left:280.50px;top:331px;font-size:10.5px;letter-spacing:-0.282px;">Orders</span>
<svg width="6" height="9.5" style="left:282.9px;top:348.6px" viewBox="0 0 6 9.5" fill="none" stroke="#161513" stroke-width=".95" stroke-linecap="round" stroke-linejoin="round"><path d="M3 9.5 V0.9 M0.9 3.1 L3 0.8 L5.1 3.1"/></svg>
<span class="t" style="left:297.50px;top:350px;font-size:10.0px;color:#2b4763;-webkit-text-stroke:0.35px;letter-spacing:-0.049px;">6.9%</span>
<svg width="40" height="12" style="left:374.5px;top:347.9px" viewBox="0 0 40 12"><defs><linearGradient id="sg374" x1="0" y1="0" x2="0" y2="1"><stop offset="0" stop-color="#74cc50" stop-opacity=".9"/><stop offset="1" stop-color="#74cc50" stop-opacity=".22"/></linearGradient></defs><path d="M0 6.3 H27" stroke="#c4c4c4" stroke-width=".7" stroke-dasharray="1.8 1.6"/><path d="M0.0 9.3 L2.0 10.2 L4.0 10.8 L8.0 10.2 L12.0 9.2 L14.5 9.6 L17.0 10.8 L21.0 10.2 L26.0 9.3 L28.0 7.0 L30.0 4.5 L33.0 2.6 L36.5 1.2 L40.0 0.1 L40 12 L0 12 Z" fill="url(#sg374)"/><path d="M0.0 9.3 L2.0 10.2 L4.0 10.8 L8.0 10.2 L12.0 9.2 L14.5 9.6 L17.0 10.8 L21.0 10.2 L26.0 9.3 L28.0 7.0 L30.0 4.5 L33.0 2.6 L36.5 1.2 L40.0 0.1" fill="none" stroke="#4f9e34" stroke-width=".8" stroke-linejoin="round"/></svg>
<div class="kbox" style="left:434.5px;top:318px;width:155.5px;height:52.5px"></div>
<span class="t" style="left:445.50px;top:331px;font-size:10.5px;letter-spacing:-0.089px;">Inventory</span>
<svg width="6" height="9.5" style="left:447.9px;top:348.6px" viewBox="0 0 6 9.5" fill="none" stroke="#2e6b1e" stroke-width=".95" stroke-linecap="round" stroke-linejoin="round"><path d="M3 9.5 V0.9 M0.9 3.1 L3 0.8 L5.1 3.1"/></svg>
<span class="t" style="left:462.50px;top:350px;font-size:10.0px;color:#2b4763;-webkit-text-stroke:0.35px;letter-spacing:-0.512px;">19.9%</span>
<svg width="40" height="12" style="left:539.5px;top:347.9px" viewBox="0 0 40 12"><defs><linearGradient id="sg539" x1="0" y1="0" x2="0" y2="1"><stop offset="0" stop-color="#74cc50" stop-opacity=".9"/><stop offset="1" stop-color="#74cc50" stop-opacity=".22"/></linearGradient></defs><path d="M0 6.3 H27" stroke="#c4c4c4" stroke-width=".7" stroke-dasharray="1.8 1.6"/><path d="M0.0 10.8 L4.0 10.6 L6.0 9.9 L13.0 9.5 L20.0 9.2 L28.0 8.2 L32.0 6.6 L35.0 4.8 L38.0 2.5 L40.0 1.2 L40 12 L0 12 Z" fill="url(#sg539)"/><path d="M0.0 10.8 L4.0 10.6 L6.0 9.9 L13.0 9.5 L20.0 9.2 L28.0 8.2 L32.0 6.6 L35.0 4.8 L38.0 2.5 L40.0 1.2" fill="none" stroke="#4f9e34" stroke-width=".8" stroke-linejoin="round"/></svg>
<div class="kbox" style="left:599.5px;top:318px;width:155.5px;height:52.5px"></div>
<span class="t" style="left:610.50px;top:331px;font-size:10.5px;letter-spacing:-0.065px;">Number of Fulfillments</span>
<svg width="6" height="9.5" style="left:612.9px;top:348.6px" viewBox="0 0 6 9.5" fill="none" stroke="#2e6b1e" stroke-width=".95" stroke-linecap="round" stroke-linejoin="round"><path d="M3 9.5 V0.9 M0.9 3.1 L3 0.8 L5.1 3.1"/></svg>
<span class="t" style="left:627.50px;top:350px;font-size:10.0px;color:#2b4763;-webkit-text-stroke:0.35px;letter-spacing:-0.099px;">9.2%</span>
<svg width="40" height="12" style="left:704.5px;top:347.9px" viewBox="0 0 40 12"><defs><linearGradient id="sg704" x1="0" y1="0" x2="0" y2="1"><stop offset="0" stop-color="#74cc50" stop-opacity=".9"/><stop offset="1" stop-color="#74cc50" stop-opacity=".22"/></linearGradient></defs><path d="M0 6.3 H27" stroke="#c4c4c4" stroke-width=".7" stroke-dasharray="1.8 1.6"/><path d="M0.0 9.3 L3.0 10.4 L7.0 10.7 L10.0 9.8 L13.0 9.2 L15.5 10.3 L19.0 10.6 L24.0 9.8 L26.5 8.5 L29.0 5.0 L31.0 3.4 L35.0 2.0 L40.0 0.3 L40 12 L0 12 Z" fill="url(#sg704)"/><path d="M0.0 9.3 L3.0 10.4 L7.0 10.7 L10.0 9.8 L13.0 9.2 L15.5 10.3 L19.0 10.6 L24.0 9.8 L26.5 8.5 L29.0 5.0 L31.0 3.4 L35.0 2.0 L40.0 0.3" fill="none" stroke="#4f9e34" stroke-width=".8" stroke-linejoin="round"/></svg>
<div class="kbox" style="left:764.5px;top:318px;width:155.5px;height:52.5px"></div>
<span class="t" style="left:775.50px;top:331px;font-size:10.5px;letter-spacing:-0.300px;">Late Shipped Orders</span>
<span class="t" style="left:775.50px;top:350px;font-size:10.0px;-webkit-text-stroke:0.40px;letter-spacing:-0.362px;">19</span>
<i class="caret" style="left:276.8px;top:387.4px;width:6.8px;height:3.6px;margin-left:-.5px"></i>
<span class="t" style="left:299.50px;top:385px;font-size:9.0px;-webkit-text-stroke:0.30px;letter-spacing:0.141px;">Indicator</span>
<span class="t" style="left:485.00px;top:385px;font-size:9.0px;-webkit-text-stroke:0.30px;letter-spacing:0.031px;">Period</span>
<span class="t" style="left:705.00px;top:385px;font-size:9.0px;-webkit-text-stroke:0.30px;letter-spacing:0.083px;">Current</span>
<span class="t" style="left:782.50px;top:385px;font-size:9.0px;-webkit-text-stroke:0.30px;letter-spacing:0.048px;">Previous</span>
<span class="t" style="left:857.50px;top:385px;font-size:9.0px;-webkit-text-stroke:0.30px;letter-spacing:-0.089px;">Change</span>
<div class="hl" style="left:270px;top:397.0px;width:650px"></div>
<div class="hl" style="left:270px;top:415.0px;width:650px"></div>
<div class="hl" style="left:270px;top:433.0px;width:650px"></div>
<div class="hl" style="left:270px;top:451.0px;width:650px"></div>
<div class="hl" style="left:270px;top:469.0px;width:650px"></div>
<div class="hl" style="left:270px;top:487.0px;width:650px"></div>
<span class="t" style="left:299.50px;top:403px;font-size:9.0px;-webkit-text-stroke:0.35px;letter-spacing:-0.019px;">Orders</span>
<span class="t" style="left:485px;top:403px;font-size:9.1px;-webkit-text-stroke:.2px;letter-spacing:0.061px;"><span style="color:#35567a">This Month</span><span style="-webkit-text-stroke:.3px"> vs. </span><span style="color:#35567a">Last Month</span></span>
<span class="t" style="left:705.00px;top:403px;font-size:9.1px;color:#35567a;-webkit-text-stroke:0.20px;letter-spacing:-0.729px;">155</span>
<span class="t" style="left:782.50px;top:403px;font-size:9.1px;color:#35567a;-webkit-text-stroke:0.20px;letter-spacing:-0.529px;">145</span>
<svg width="6" height="9.4" style="left:860.0px;top:401.7px" viewBox="0 0 6 9.4" fill="none" stroke="#2e6b1e" stroke-width=".95" stroke-linecap="round" stroke-linejoin="round"><path d="M3 9.4 V0.9 M0.9 3.1 L3 0.8 L5.1 3.1"/></svg>
<span class="t" style="left:875.00px;top:403px;font-size:9.0px;-webkit-text-stroke:0.30px;letter-spacing:-0.329px;">6.9%</span>
<span class="t" style="left:299.50px;top:421px;font-size:9.0px;-webkit-text-stroke:0.35px;letter-spacing:0.152px;">Inventory</span>
<span class="t" style="left:485px;top:421px;font-size:9.1px;-webkit-text-stroke:.2px;letter-spacing:0.012px;"><span style="color:#35567a">End of This Month</span><span style="-webkit-text-stroke:.3px"> vs. </span><span style="color:#35567a">End of Last Month</span></span>
<span class="t" style="left:705.00px;top:421px;font-size:9.1px;color:#35567a;-webkit-text-stroke:0.20px;letter-spacing:-0.012px;">$6,446,453</span>
<span class="t" style="left:782.50px;top:421px;font-size:9.1px;color:#35567a;-webkit-text-stroke:0.20px;letter-spacing:-0.312px;">$5,374,952</span>
<svg width="6" height="9.4" style="left:860.0px;top:419.7px" viewBox="0 0 6 9.4" fill="none" stroke="#2e6b1e" stroke-width=".95" stroke-linecap="round" stroke-linejoin="round"><path d="M3 9.4 V0.9 M0.9 3.1 L3 0.8 L5.1 3.1"/></svg>
<span class="t" style="left:875.00px;top:421px;font-size:9.0px;-webkit-text-stroke:0.30px;letter-spacing:-0.706px;">19.9%</span>
<span class="t" style="left:299.50px;top:439px;font-size:9.0px;-webkit-text-stroke:0.35px;letter-spacing:0.153px;">Number of Fulfillments</span>
<span class="t" style="left:485px;top:439px;font-size:9.1px;-webkit-text-stroke:.2px;letter-spacing:0.061px;"><span style="color:#35567a">This Month</span><span style="-webkit-text-stroke:.3px"> vs. </span><span style="color:#35567a">Last Month</span></span>
<span class="t" style="left:705.00px;top:439px;font-size:9.1px;color:#35567a;-webkit-text-stroke:0.20px;letter-spacing:-0.596px;">154</span>
<span class="t" style="left:782.50px;top:439px;font-size:9.1px;color:#35567a;-webkit-text-stroke:0.20px;letter-spacing:-0.996px;">141</span>
<svg width="6" height="9.4" style="left:860.0px;top:437.7px" viewBox="0 0 6 9.4" fill="none" stroke="#2e6b1e" stroke-width=".95" stroke-linecap="round" stroke-linejoin="round"><path d="M3 9.4 V0.9 M0.9 3.1 L3 0.8 L5.1 3.1"/></svg>
<span class="t" style="left:875.00px;top:439px;font-size:9.0px;-webkit-text-stroke:0.30px;letter-spacing:-0.429px;">9.2%</span>
<span class="t" style="left:299.50px;top:457px;font-size:9.0px;-webkit-text-stroke:0.35px;letter-spacing:0.041px;">Number of Customer Returns</span>
<span class="t" style="left:485px;top:457px;font-size:9.1px;-webkit-text-stroke:.2px;letter-spacing:0.061px;"><span style="color:#35567a">This Month</span><span style="-webkit-text-stroke:.3px"> vs. </span><span style="color:#35567a">Last Month</span></span>
<span class="t" style="left:705.00px;top:457px;font-size:9.1px;color:#35567a;-webkit-text-stroke:0.20px;letter-spacing:-0.662px;">2</span>
<span class="t" style="left:782.50px;top:457px;font-size:9.1px;color:#35567a;-webkit-text-stroke:0.20px;letter-spacing:-0.662px;">3</span>
<svg width="6" height="9.4" style="left:860.0px;top:455.7px" viewBox="0 0 6 9.4" fill="none" stroke="#c0362c" stroke-width=".95" stroke-linecap="round" stroke-linejoin="round"><path d="M3 0.6 V9.1 M0.9 6.9 L3 9.2 L5.1 6.9"/></svg>
<span class="t" style="left:875.00px;top:457px;font-size:9.0px;-webkit-text-stroke:0.30px;letter-spacing:-0.366px;">33.3%</span>
<span class="t" style="left:299.50px;top:475px;font-size:9.0px;-webkit-text-stroke:0.35px;letter-spacing:-0.045px;">Late Shipped Orders</span>
<span class="t" style="left:485px;top:475px;font-size:9.1px;-webkit-text-stroke:.2px;letter-spacing:0.067px;"><span style="color:#35567a">Current</span></span>
<span class="t" style="left:705.00px;top:475px;font-size:9.1px;color:#35567a;-webkit-text-stroke:0.20px;letter-spacing:-0.963px;">19</span>
<section class="card" style="left:255px;top:512px;width:680px;height:250px"></section>
<i class="grip" style="left:589px;top:517.6px"></i>
<span class="t" style="left:270.00px;top:533px;font-size:10.6px;font-weight:700;letter-spacing:-0.227px;">Monthly Inventory Trend</span>
<div class="sel" style="left:269.5px;top:560.2px;width:68px;height:15.8px"></div>
<span class="t" style="left:275.80px;top:564px;font-size:9.2px;letter-spacing:0.061px;">Monthly</span>
<i class="caret" style="left:326.6px;top:566.6px;width:7px;height:3.6px;margin-left:-.5px"></i>
<div class="bt" style="left:774.0px;top:559.6px;width:22.6px;height:17.0px;border-radius:3px 0 0 3px;"></div><svg width="11" height="11" style="left:779.8px;top:562.5px" viewBox="0 0 11 11" fill="none" stroke="#262626" stroke-width="1"><path d="M1 1 V10 H10 M1 3.2 C3 2.2 4.5 4.2 6 3.2 S8.5 2 10 3 V9.8 M1 5.8 C3 4.8 4.5 6.8 6 5.8 S8.5 4.6 10 5.6 M1 8 C3 7.2 4.5 8.8 6 8 S8.5 7 10 7.8"/></svg><div class="bt" style="left:796.6px;top:559.6px;width:22.6px;height:17.0px;"></div><div class="abs" style="left:796.1px;top:559.6px;width:1px;height:17.0px;background:#d6d5d3"></div><svg width="11" height="11" style="left:802.4px;top:562.5px" viewBox="0 0 11 11" fill="none" stroke="#262626" stroke-width="1"><path d="M1 .6 V10 H10.2 M1 3.4 C3 3.6 5 2.4 9.8 1.2 M1 5.2 C4 5.6 6 4.4 9.8 4 M1 7.4 C4 7.8 6 6.8 9.8 6.8"/></svg><div class="bt" style="left:819.2px;top:559.6px;width:22.6px;height:17.0px;"></div><div class="abs" style="left:818.7px;top:559.6px;width:1px;height:17.0px;background:#d6d5d3"></div><svg width="11" height="11" style="left:825.0px;top:562.5px" viewBox="0 0 11 11" fill="none" stroke="#262626" stroke-width="1"><path d="M1 .6 V10 H10.2 M1 2.4 H6.4 M1 5 H9.4 M1 7.6 H7.6"/></svg><div class="bt on" style="left:841.8px;top:559.6px;width:22.6px;height:17.0px;border-radius:0 3px 3px 0;"></div><svg width="11" height="11" style="left:847.6px;top:562.5px" viewBox="0 0 11 11" fill="none" stroke="#000" stroke-width="1"><path d="M1 .6 V10 H10.2 M3.4 10 V3.4 M5.6 10 V6 M7.6 10 V2.4 M9.6 10 V5"/></svg><div class="bt on" style="left:874.5px;top:559.6px;width:22.6px;height:17.0px;border-radius:3px 0 0 3px;"></div><svg width="11" height="11" style="left:880.3px;top:562.5px" viewBox="0 0 11 11" fill="none" stroke="#000" stroke-width="1"><path d="M1 .6 V10 H10.2 M1.4 2 L3.6 6.6 L5.6 4.4 L7.2 7.2 L9.8 6"/></svg><div class="bt" style="left:897.1px;top:559.6px;width:22.6px;height:17.0px;border-radius:0 3px 3px 0;"></div><svg width="11" height="11" style="left:902.9px;top:562.5px" viewBox="0 0 11 11" fill="none" stroke="#262626" stroke-width="1"><path d="M1 .6 V10 H10.2 M3.2 10 V6.6 M5.2 10 V5.2 M7.2 10 V3.8 M9.2 10 V2.6 M2.4 5.6 L9.6 1"/></svg>
<div class="hl" style="left:309px;top:601.8px;width:604px;background:#d6d6d6"></div>
<span class="t" style="left:275.60px;top:599px;font-size:9.0px;color:#1a1a1a;letter-spacing:-0.083px;">7.00M</span>
<div class="hl" style="left:309px;top:632.5px;width:604px;background:#d6d6d6"></div>
<span class="t" style="left:275.60px;top:630px;font-size:9.0px;color:#1a1a1a;letter-spacing:-0.083px;">6.00M</span>
<div class="hl" style="left:309px;top:661.9px;width:604px;background:#d6d6d6"></div>
<span class="t" style="left:275.60px;top:659px;font-size:9.0px;color:#1a1a1a;letter-spacing:-0.083px;">5.00M</span>
<div class="hl" style="left:309px;top:691.5px;width:604px;background:#d6d6d6"></div>
<span class="t" style="left:275.60px;top:689px;font-size:9.0px;color:#1a1a1a;letter-spacing:-0.083px;">4.00M</span>
<div class="hl" style="left:309px;top:720.9px;width:604px;background:#d6d6d6"></div>
<span class="t" style="left:275.60px;top:718px;font-size:9.0px;color:#1a1a1a;letter-spacing:-0.083px;">3.00M</span>
<svg width="1180" height="745" style="left:0;top:0" viewBox="0 0 1180 745"><defs><linearGradient id="bg1" x1="0" y1="0" x2="0" y2="1"><stop offset="0" stop-color="#8ea2b0"/><stop offset=".3" stop-color="#7b999e"/><stop offset=".65" stop-color="#607d85"/><stop offset="1" stop-color="#47656e"/></linearGradient></defs>
<path d="M325.7 811 V714.6 Q325.7 712.1 328.2 712.1 H343.4 Q345.9 712.1 345.9 714.6 V811 Z" fill="url(#bg1)" stroke="#6f8a92" stroke-opacity=".35" stroke-width=".6"/>
<path d="M371.9 811 V713.6 Q371.9 711.1 374.4 711.1 H389.6 Q392.1 711.1 392.1 713.6 V811 Z" fill="url(#bg1)" stroke="#6f8a92" stroke-opacity=".35" stroke-width=".6"/>
<path d="M417.0 811 V709.1 Q417.0 706.6 419.5 706.6 H434.7 Q437.2 706.6 437.2 709.1 V811 Z" fill="url(#bg1)" stroke="#6f8a92" stroke-opacity=".35" stroke-width=".6"/>
<path d="M462.9 811 V707.6 Q462.9 705.1 465.4 705.1 H480.6 Q483.1 705.1 483.1 707.6 V811 Z" fill="url(#bg1)" stroke="#6f8a92" stroke-opacity=".35" stroke-width=".6"/>
<path d="M507.4 811 V704.5 Q507.4 702.0 509.9 702.0 H525.1 Q527.6 702.0 527.6 704.5 V811 Z" fill="url(#bg1)" stroke="#6f8a92" stroke-opacity=".35" stroke-width=".6"/>
<path d="M553.4 811 V706.6 Q553.4 704.1 555.9 704.1 H571.1 Q573.6 704.1 573.6 706.6 V811 Z" fill="url(#bg1)" stroke="#6f8a92" stroke-opacity=".35" stroke-width=".6"/>
<path d="M599.9 811 V703.3 Q599.9 700.8 602.4 700.8 H617.6 Q620.1 700.8 620.1 703.3 V811 Z" fill="url(#bg1)" stroke="#6f8a92" stroke-opacity=".35" stroke-width=".6"/>
<path d="M644.9 811 V701.1 Q644.9 698.6 647.4 698.6 H662.6 Q665.1 698.6 665.1 701.1 V811 Z" fill="url(#bg1)" stroke="#6f8a92" stroke-opacity=".35" stroke-width=".6"/>
<path d="M690.9 811 V695.3 Q690.9 692.8 693.4 692.8 H708.6 Q711.1 692.8 711.1 695.3 V811 Z" fill="url(#bg1)" stroke="#6f8a92" stroke-opacity=".35" stroke-width=".6"/>
<path d="M735.5 811 V686.9 Q735.5 684.4 738.0 684.4 H753.2 Q755.7 684.4 755.7 686.9 V811 Z" fill="url(#bg1)" stroke="#6f8a92" stroke-opacity=".35" stroke-width=".6"/>
<path d="M782.0 811 V670.6 Q782.0 668.1 784.5 668.1 H799.7 Q802.2 668.1 802.2 670.6 V811 Z" fill="url(#bg1)" stroke="#6f8a92" stroke-opacity=".35" stroke-width=".6"/>
<path d="M827.9 811 V653.9 Q827.9 651.4 830.4 651.4 H845.6 Q848.1 651.4 848.1 653.9 V811 Z" fill="url(#bg1)" stroke="#6f8a92" stroke-opacity=".35" stroke-width=".6"/>
<path d="M869.5 811 V622.6 Q869.5 620.1 872.0 620.1 H887.2 Q889.7 620.1 889.7 622.6 V811 Z" fill="url(#bg1)" stroke="#6f8a92" stroke-opacity=".35" stroke-width=".6"/>
<path d="M336.0 710.6 C343.7 710.3 366.8 709.5 382.0 708.8 C397.2 708.1 411.8 707.3 427.0 706.6 C442.2 705.9 457.9 705.2 473.0 704.6 C488.1 704.0 502.4 703.4 517.5 703.0 C532.6 702.6 548.1 702.4 563.5 702.0 C578.9 701.6 594.8 701.1 610.0 700.5 C625.2 699.9 639.8 699.4 655.0 698.2 C670.2 697.0 685.9 695.5 701.0 693.2 C716.1 691.0 730.4 688.3 745.6 684.7 C760.8 681.1 776.6 676.6 792.0 671.6 C807.4 666.6 823.3 659.0 838.0 654.6 C852.7 650.2 873.0 647.0 880.0 645.5 " fill="none" stroke="#6f8b91" stroke-width=".8" stroke-dasharray="4 2.8"/></svg>
<section class="card" style="left:945px;top:112px;width:220.5px;height:207px"></section>
<i class="grip" style="left:1049px;top:117.4px"></i>
<span class="t" style="left:960.00px;top:133px;font-size:10.6px;font-weight:700;letter-spacing:-0.219px;">KPI Meter</span>
<div class="sel" style="left:960px;top:164.3px;width:190px;height:15.4px"></div>
<span class="t" style="left:965.50px;top:168px;font-size:9.2px;letter-spacing:-0.055px;">Number of Fulfillments</span>
<i class="caret" style="left:1138.7px;top:170.4px;width:7px;height:3.6px;margin-left:-.5px"></i>
<svg width="1180" height="745" style="left:0;top:0" viewBox="0 0 1180 745" fill="none"><path d="M1099.8 228.1 A68.5 68.5 0 0 1 1123.5 280.0" stroke="#f9f8f6" stroke-width="9"/><path d="M986.5 280.0 A68.5 68.5 0 0 1 1099.8 228.1" stroke="#4a8526" stroke-width="9.2"/><path d="M1084.0 229.2 L1092.9 213.5" stroke="#1f3d12" stroke-width=".9"/></svg>
<span class="t" style="left:1092.60px;top:203px;font-size:7.0px;color:#3a3836;letter-spacing:-1.029px;">141</span>
<span class="t" style="left:1037.00px;top:246px;font-size:22.0px;font-weight:700;letter-spacing:-0.306px;">154</span>
<span class="t" style="left:1010.80px;top:273px;font-size:9.2px;letter-spacing:-0.137px;">Number of Fulfillments</span>
<span class="t" style="left:984.60px;top:284px;font-size:7.0px;color:#3a3836;">0</span>
<span class="t" style="left:1118.80px;top:284px;font-size:7.0px;color:#3a3836;letter-spacing:-0.496px;">212</span>
<section class="card" style="left:945px;top:329px;width:220.5px;height:369px"></section>
<i class="grip" style="left:1049px;top:334.8px"></i>
<span class="t" style="left:960.00px;top:350px;font-size:10.6px;font-weight:700;letter-spacing:-0.209px;">Monthly Inventory Trend</span>
<div class="sel" style="left:960px;top:376.5px;width:185px;height:16.1px"></div>
<span class="t" style="left:965.50px;top:381px;font-size:9.2px;letter-spacing:0.061px;">Monthly</span>
<i class="caret" style="left:1133.8px;top:383px;width:7px;height:3.6px;margin-left:-.5px"></i>
<div class="bt" style="left:960.0px;top:407.4px;width:22.6px;height:16.8px;border-radius:3px 0 0 3px;"></div><svg width="11" height="11" style="left:965.8px;top:410.2px" viewBox="0 0 11 11" fill="none" stroke="#262626" stroke-width="1"><path d="M1 1 V10 H10 M1 3.2 C3 2.2 4.5 4.2 6 3.2 S8.5 2 10 3 V9.8 M1 5.8 C3 4.8 4.5 6.8 6 5.8 S8.5 4.6 10 5.6 M1 8 C3 7.2 4.5 8.8 6 8 S8.5 7 10 7.8"/></svg><div class="bt" style="left:982.6px;top:407.4px;width:22.6px;height:16.8px;"></div><div class="abs" style="left:982.1px;top:407.4px;width:1px;height:16.8px;background:#d6d5d3"></div><svg width="11" height="11" style="left:988.4px;top:410.2px" viewBox="0 0 11 11" fill="none" stroke="#262626" stroke-width="1"><path d="M1 .6 V10 H10.2 M1 3.4 C3 3.6 5 2.4 9.8 1.2 M1 5.2 C4 5.6 6 4.4 9.8 4 M1 7.4 C4 7.8 6 6.8 9.8 6.8"/></svg><div class="bt" style="left:1005.2px;top:407.4px;width:22.6px;height:16.8px;"></div><div class="abs" style="left:1004.7px;top:407.4px;width:1px;height:16.8px;background:#d6d5d3"></div><svg width="11" height="11" style="left:1011.0px;top:410.2px" viewBox="0 0 11 11" fill="none" stroke="#262626" stroke-width="1"><path d="M1 .6 V10 H10.2 M1 2.4 H6.4 M1 5 H9.4 M1 7.6 H7.6"/></svg><div class="bt on" style="left:1027.8px;top:407.4px;width:22.6px;height:16.8px;border-radius:0 3px 3px 0;"></div><svg width="11" height="11" style="left:1033.6px;top:410.2px" viewBox="0 0 11 11" fill="none" stroke="#000" stroke-width="1"><path d="M1 .6 V10 H10.2 M3.4 10 V3.4 M5.6 10 V6 M7.6 10 V2.4 M9.6 10 V5"/></svg><div class="bt on" style="left:1104.3px;top:407.4px;width:22.9px;height:16.8px;border-radius:3px 0 0 3px;"></div><svg width="11" height="11" style="left:1110.2px;top:410.2px" viewBox="0 0 11 11" fill="none" stroke="#000" stroke-width="1"><path d="M1 .6 V10 H10.2 M1.4 2 L3.6 6.6 L5.6 4.4 L7.2 7.2 L9.8 6"/></svg><div class="bt" style="left:1127.2px;top:407.4px;width:22.9px;height:16.8px;border-radius:0 3px 3px 0;"></div><svg width="11" height="11" style="left:1133.2px;top:410.2px" viewBox="0 0 11 11" fill="none" stroke="#262626" stroke-width="1"><path d="M1 .6 V10 H10.2 M3.2 10 V6.6 M5.2 10 V5.2 M7.2 10 V3.8 M9.2 10 V2.6 M2.4 5.6 L9.6 1"/></svg>
<div class="hl" style="left:1000px;top:439.9px;width:144px;background:#d9d9d9"></div>
<span class="t" style="left:966.20px;top:437px;font-size:9.0px;color:#1a1a1a;letter-spacing:-0.083px;">8.00M</span>
<div class="hl" style="left:1000px;top:491.9px;width:144px;background:#d9d9d9"></div>
<span class="t" style="left:966.20px;top:489px;font-size:9.0px;color:#1a1a1a;letter-spacing:-0.083px;">6.00M</span>
<div class="hl" style="left:1000px;top:543.9px;width:144px;background:#d9d9d9"></div>
<span class="t" style="left:966.20px;top:541px;font-size:9.0px;color:#1a1a1a;letter-spacing:-0.083px;">4.00M</span>
<div class="hl" style="left:1000px;top:595.9px;width:144px;background:#d9d9d9"></div>
<span class="t" style="left:966.20px;top:593px;font-size:9.0px;color:#1a1a1a;letter-spacing:-0.083px;">2.00M</span>
<span class="t" style="left:966.20px;top:645px;font-size:9.0px;color:#1a1a1a;letter-spacing:-0.083px;">0.00M</span>
<div class="abs" style="left:1000px;top:647.6px;width:144px;height:1.3px;background:#4d4d4d"></div>
<svg width="1180" height="745" style="left:0;top:0" viewBox="0 0 1180 745"><defs><linearGradient id="bg2" x1="0" y1="0" x2="0" y2="1"><stop offset="0" stop-color="#8ea2b0"/><stop offset=".3" stop-color="#7b999e"/><stop offset=".65" stop-color="#607d85"/><stop offset="1" stop-color="#47656e"/></linearGradient></defs>
<path d="M1003.95 647.6 V564.4 A2.3 2.3 0 0 1 1008.55 564.4 V647.6 Z" fill="url(#bg2)"/>
<path d="M1014.95 647.6 V563.5 A2.3 2.3 0 0 1 1019.55 563.5 V647.6 Z" fill="url(#bg2)"/>
<path d="M1025.70 647.6 V559.6 A2.3 2.3 0 0 1 1030.30 559.6 V647.6 Z" fill="url(#bg2)"/>
<path d="M1036.45 647.6 V558.3 A2.3 2.3 0 0 1 1041.05 558.3 V647.6 Z" fill="url(#bg2)"/>
<path d="M1047.20 647.6 V555.5 A2.3 2.3 0 0 1 1051.80 555.5 V647.6 Z" fill="url(#bg2)"/>
<path d="M1057.95 647.6 V557.4 A2.3 2.3 0 0 1 1062.55 557.4 V647.6 Z" fill="url(#bg2)"/>
<path d="M1068.95 647.6 V554.5 A2.3 2.3 0 0 1 1073.55 554.5 V647.6 Z" fill="url(#bg2)"/>
<path d="M1079.60 647.6 V552.5 A2.3 2.3 0 0 1 1084.20 552.5 V647.6 Z" fill="url(#bg2)"/>
<path d="M1090.70 647.6 V547.5 A2.3 2.3 0 0 1 1095.30 547.5 V647.6 Z" fill="url(#bg2)"/>
<path d="M1101.30 647.6 V540.2 A2.3 2.3 0 0 1 1105.90 540.2 V647.6 Z" fill="url(#bg2)"/>
<path d="M1112.20 647.6 V525.9 A2.3 2.3 0 0 1 1116.80 525.9 V647.6 Z" fill="url(#bg2)"/>
<path d="M1122.95 647.6 V511.3 A2.3 2.3 0 0 1 1127.55 511.3 V647.6 Z" fill="url(#bg2)"/>
<path d="M1133.30 647.6 V484.0 A2.3 2.3 0 0 1 1137.90 484.0 V647.6 Z" fill="url(#bg2)"/>
<path d="M1006.2 560.7 L1017.2 559.2 L1028.0 557.3 L1038.8 555.5 L1049.5 554.1 L1060.2 553.2 L1071.2 551.9 L1081.9 549.9 L1093.0 545.6 L1103.6 538.1 L1114.5 526.7 L1125.2 511.9 L1135.6 503.9" fill="none" stroke="#7f979c" stroke-width=".9" stroke-dasharray="3.4 2.2"/></svg>
<span class="t" style="left:1049.30px;top:650px;font-size:9.0px;color:#1a1a1a;letter-spacing:-0.133px;transform:translateX(-50%);">Jul '24</span>
<span class="t" style="left:1114.30px;top:650px;font-size:9.0px;color:#1a1a1a;letter-spacing:-0.079px;transform:translateX(-50%);">Jan '25</span>
<div class="abs" style="left:998.2px;top:671.6px;width:6.8px;height:6.8px;border-radius:50%;background:linear-gradient(#7c989f,#5b7c84)"></div>
<span class="t" style="left:1010.80px;top:672px;font-size:7.3px;color:#6a6a6a;letter-spacing:-0.202px;">Inventory</span>
<div class="abs" style="left:1052px;top:674.6px;width:4.6px;height:1px;background:#7f979c"></div><div class="abs" style="left:1058.4px;top:674.6px;width:3px;height:1px;background:#7f979c"></div>
<span class="t" style="left:1065.60px;top:672px;font-size:7.3px;color:#6a6a6a;letter-spacing:-0.272px;">Moving Average</span>
<section class="card" style="left:945px;top:708px;width:220.5px;height:60px"></section>
<i class="grip" style="left:1049px;top:713.2px"></i>
<span class="t" style="left:960.00px;top:729px;font-size:10.6px;font-weight:700;letter-spacing:-0.304px;">Monthly Orders Trend</span>
<svg width="24" height="66" style="left:1141px;top:281px;filter:drop-shadow(0 1px 1.5px rgba(0,0,0,.3))" viewBox="0 0 24 66"><path d="M12 .8 A6.4 6.4 0 0 1 18.4 7.2 C18.4 10.6 14.6 12.6 12 16.4 C9.4 12.6 5.6 10.6 5.6 7.2 A6.4 6.4 0 0 1 12 .8 Z" fill="#2f5a75"/><rect x=".6" y="20.2" width="22.8" height="45" rx="11.4" fill="#2f5a75"/><circle cx="12" cy="31.2" r="7.2" fill="none" stroke="#fff" stroke-width="1.1"/><circle cx="7.3" cy="45.9" r="1.5" fill="#7d9db0"/><circle cx="7.3" cy="50.6" r="1.5" fill="#7d9db0"/><circle cx="7.3" cy="55.3" r="1.5" fill="#7d9db0"/><circle cx="12.0" cy="45.9" r="1.5" fill="#7d9db0"/><circle cx="12.0" cy="50.6" r="1.5" fill="#7d9db0"/><circle cx="12.0" cy="55.3" r="1.5" fill="#7d9db0"/><circle cx="16.7" cy="45.9" r="1.5" fill="#7d9db0"/><circle cx="16.7" cy="50.6" r="1.5" fill="#7d9db0"/><circle cx="16.7" cy="55.3" r="1.5" fill="#7d9db0"/><text x="12" y="10.6" text-anchor="middle" font-family="Liberation Sans,sans-serif" font-weight="700" font-size="9.5" fill="#fff">?</text><text x="12.2" y="35.2" text-anchor="middle" font-family="Liberation Serif,serif" font-style="italic" font-weight="700" font-size="11.5" fill="#fff">i</text></svg>
</div>
</body>
</html>
